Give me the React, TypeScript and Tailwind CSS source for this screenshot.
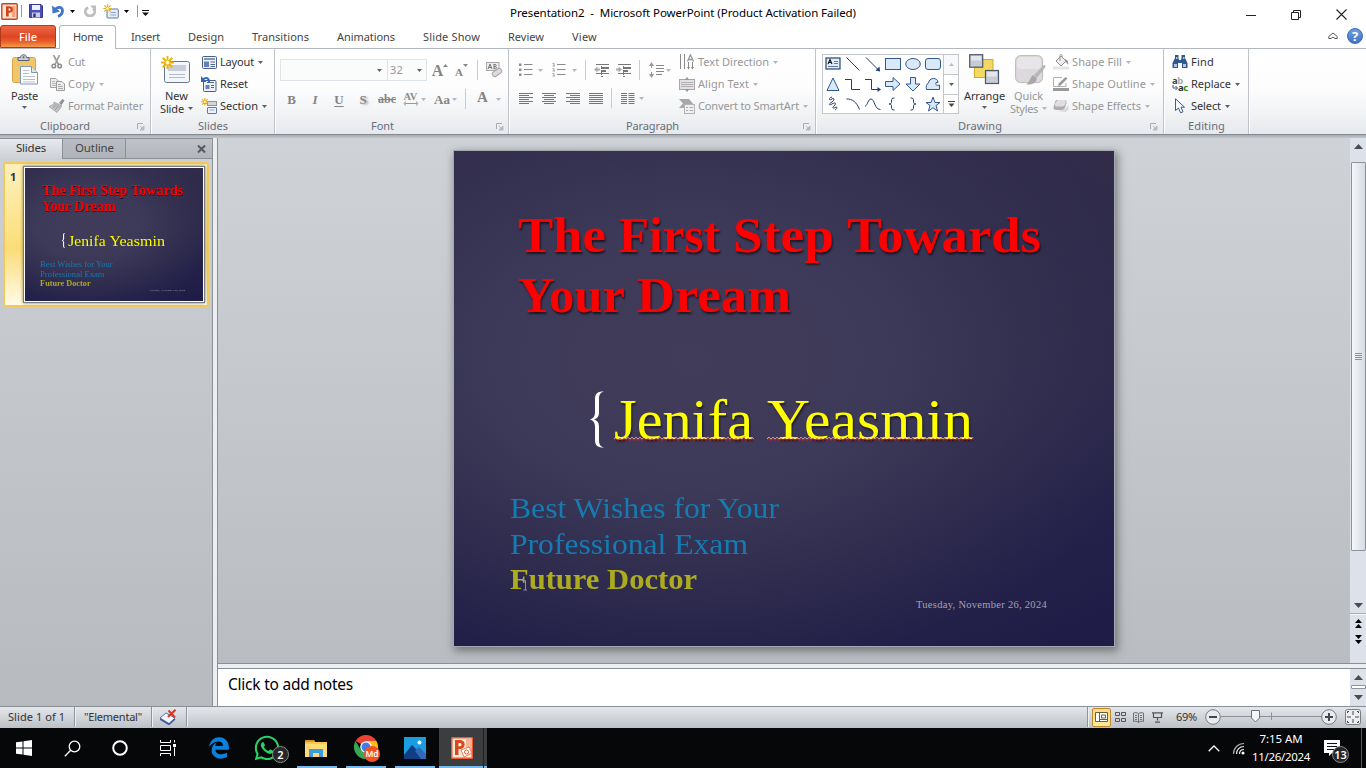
import React, { useLayoutEffect, useRef } from "react";
import { FaEdgeLegacy, FaWhatsapp } from "react-icons/fa";

/* A run of text set to an exact width, by tracking or by horizontal stretch. */
function Fit({ w, stretch = false, className = "", children }: { w: number; stretch?: boolean; className?: string; children: string }) {
  const ref = useRef<HTMLSpanElement>(null);
  useLayoutEffect(() => {
    const el = ref.current;
    if (!el) return;
    el.style.letterSpacing = "";
    el.style.transform = "";
    const natural = parseFloat(getComputedStyle(el).width);
    if (!natural) return;
    if (stretch) el.style.transform = `scaleX(${w / natural})`;
    else el.style.letterSpacing = `${(w - natural) / children.length}px`;
  }, [w, stretch, children]);
  return (
    <span className={`inline-block shrink-0 whitespace-nowrap text-left ${className}`} style={{ width: w }}>
      <span ref={ref} className="inline-block origin-left">{children}</span>
    </span>
  );
}

function Ico({ w, h, className = "", children }: { w: number; h: number; className?: string; children: React.ReactNode }) {
  return (
    <svg width={w} height={h} viewBox={`0 0 ${w} ${h}`} fill="none" className={`block shrink-0 ${className}`}>
      {children}
    </svg>
  );
}

function Caret({ dim = false, className = "" }: { dim?: boolean; className?: string }) {
  return (
    <Ico w={5} h={3} className={className}>
      <path d="M0 0H5L2.500 3Z" fill={dim ? "#b4b6b9" : "#5d6063"} />
    </Ico>
  );
}

function Row({ icon, label, w, dim = false, caret = false }: { icon: React.ReactNode; label: string; w: number; dim?: boolean; caret?: boolean }) {
  return (
    <div className={`flex h-[22px] items-center ${dim ? "text-[#979797]" : "text-[#333]"}`}>
      <span className="mr-[3px] flex w-4 justify-center">{icon}</span>
      <Fit w={w}>{label}</Fit>
      {caret && <Caret dim={dim} className="ml-[3.5px]" />}
    </div>
  );
}

function Group({ width, label, lw, ml, launcher = 0, children }: { width: string; label: string; lw: number; ml: string; launcher?: number; children: React.ReactNode }) {
  return (
    <section className={`flex h-full shrink-0 flex-col border-r border-[#bfc3c9] shadow-[1px_0_0_#fff] ${width}`}>
      <div className="flex h-[68px] pt-[2px]">{children}</div>
      <div className={`flex h-[17px] items-center text-[#696d78] ${ml}`}>
        <Fit w={lw}>{label}</Fit>
        {launcher > 0 && (
          <span className="mt-[2px]" style={{ marginLeft: launcher }}>
            <Ico w={8} h={8}>
              <path d="M.5 6V.5H6" stroke="#a9adb3" />
              <path d="M3 3L6 6M7 3V7H3Z" stroke="#a9adb3" fill="#c2c6ca" strokeWidth=".7" />
            </Ico>
          </span>
        )}
      </div>
    </section>
  );
}

function Sep({ className = "" }: { className?: string }) {
  return <span className={`h-5 w-px shrink-0 bg-[#c9ccd1] ${className}`} />;
}

/* ---------- icons ---------- */

const Star = ({ x = 6, y = 6, r = 5.5 }: { x?: number; y?: number; r?: number }) => (
  <g transform={`translate(${x} ${y}) scale(${r / 6})`} stroke="#e9b20c" strokeWidth="1.7">
    <path d="M0 -6V6M-6 0H6M-4.4 -4.4L4.4 4.4M-4.4 4.4L4.4 -4.4" />
    <circle r="1.8" fill="#fff6b8" stroke="none" />
  </g>
);

const PptLogo = () => (
  <Ico w={17} h={17}>
    <rect x=".8" y=".8" width="15.4" height="15.4" rx="1" fill="#fbe3d6" stroke="#c9431a" strokeWidth="1.4" />
    <path d="M11 3H14.5V14H11Z" fill="#f6a07c" />
    <path d="M5 3.2H8.6C13 3.2 13 9.7 8.6 9.7H7.7V13.6H5Z" fill="#cf4417" />
    <path d="M7.7 5.2H8.4C9.9 5.2 9.9 7.8 8.4 7.8H7.7Z" fill="#fff" />
  </Ico>
);

const Save = () => (
  <Ico w={14} h={14}>
    <path d="M.5 .5H12L13.5 2V13.5H.5Z" fill="#4b51b8" stroke="#343a93" />
    <rect x="3" y="1" width="8" height="5" fill="#eef1fb" />
    <rect x="3" y="8.5" width="8" height="5" fill="#c9cde6" />
    <rect x="4.3" y="9.5" width="2.4" height="3.5" fill="#2c3280" />
  </Ico>
);

const Undo = () => (
  <Ico w={12} h={13}>
    <path d="M2.500 5.500C5 1.500 10.500 1.300 10.500 5.500C10.500 8.500 8.500 10.500 6 11.500" stroke="#3f74c9" strokeWidth="2.8" />
    <path d="M0 .5L.5 8.500L8 6.500Z" fill="#3f74c9" />
  </Ico>
);

const Redo = () => (
  <Ico w={12} h={13}>
    <path d="M4 2.500C-.5 5 1 10.800 6 10.800C11 10.800 12 6 9 3.500" stroke="#bdbdbd" strokeWidth="2.600" />
    <path d="M6 .5H12V6.500Z" fill="#bdbdbd" />
  </Ico>
);

const NewQuick = () => (
  <Ico w={16} h={15}>
    <rect x="4" y="5" width="11.3" height="9" rx="1" fill="#e6edf8" stroke="#5d7aa5" />
    <path d="M7.5 8.5H13M7.5 11H13" stroke="#8fa3c2" />
    <Star x={4.5} y={4.5} r={4.3} />
  </Ico>
);

const PasteIcon = () => (
  <Ico w={28} h={31}>
    <rect x="1.5" y="3.5" width="23" height="25" rx="2" fill="#f1c56a" stroke="#d9a548" />
    <path d="M7 6.500V3.500H9.500C9.500 -.2 15.500 -.2 15.500 3.500H18V6.500Z" fill="#c8ced6" stroke="#59616c" />
    <circle cx="12.500" cy="3.300" r="1" fill="#59616c" />
    <path d="M9.500 12.500H20.500L26.500 18.500V30H9.500Z" fill="#fff" stroke="#7d98bb" />
    <path d="M20.500 12.500V18.500H26.500" fill="#dce6f3" stroke="#7d98bb" />
    <path d="M12 16.500H18M12 19.500H18M12 22.500H24M12 25.500H24M12 28H24" stroke="#b4c1d4" />
  </Ico>
);

const Cut = () => (
  <Ico w={12} h={14}>
    <path d="M2.500 0L7.500 9.500M8.500 0L4 9.500" stroke="#9d9d9d" strokeWidth="1.700" />
    <circle cx="2.800" cy="11" r="1.800" stroke="#8c8c8c" strokeWidth="1.500" />
    <circle cx="8.700" cy="11" r="1.800" stroke="#8c8c8c" strokeWidth="1.500" />
  </Ico>
);

const Copy = () => (
  <Ico w={15} h={13}>
    <path d="M.5 .5H6L8.500 3V9.500H.5Z" fill="#ededed" stroke="#a3a3a3" />
    <path d="M2 3.500H5M2 5.500H6M2 7.500H6" stroke="#b5b5b5" />
    <path d="M6.500 3.500H12L14.500 6V12.500H6.500Z" fill="#ededed" stroke="#9b9b9b" />
    <path d="M8 6.500H11M8 8.500H13M8 10.500H13" stroke="#a9a9a9" />
  </Ico>
);

const Painter = () => (
  <Ico w={16} h={14}>
    <path d="M10 4L13.500 0L15.500 1.500L12.500 6Z" fill="#8f8f8f" />
    <path d="M5 3L13 6.500L12 8.500L4.500 5Z" fill="#b9b9b9" stroke="#9d9d9d" strokeWidth=".5" />
    <path d="M4 5.500L11.500 9L8 13.500L0 7.500Z" fill="#c4c4c4" stroke="#9c9c9c" strokeWidth=".7" />
    <path d="M4 9L6 7M6 11L8.500 8" stroke="#999" />
  </Ico>
);

const NewSlideIcon = () => (
  <Ico w={31} h={30}>
    <rect x="4.500" y="6.500" width="25" height="21" rx="2" fill="#f3f6fb" stroke="#66778f" />
    <rect x="8" y="10" width="18" height="6" fill="#c9cdd9" />
    <path d="M9 19.500H25M9 22.500H25" stroke="#b4bac6" />
    <Star x={7.500} y={7.500} r={6.500} />
  </Ico>
);

const LayoutIcon = () => (
  <Ico w={15} h={13}>
    <rect x=".5" y=".5" width="14" height="12" rx="1" fill="#eef2f8" stroke="#4b5f80" />
    <rect x="2" y="2" width="11" height="2" fill="#8496b3" />
    <rect x="2" y="5.500" width="5" height="5.500" fill="#6381b8" />
    <path d="M8.500 6H13M8.500 8.500H13M8.500 10.500H13" stroke="#51678a" />
  </Ico>
);

const ResetIcon = () => (
  <Ico w={16} h={16}>
    <rect x="2.500" y="4.500" width="12.500" height="11" rx="1" fill="#eef2f8" stroke="#4b5f80" />
    <rect x="4.500" y="9" width="4" height="4" fill="#6381b8" />
    <path d="M6 6.500H13M10 9.500H13M10 11.500H13" stroke="#51678a" />
    <path d="M2 3.500C5 .7 8 2 8 6" stroke="#2f66bd" strokeWidth="2" />
    <path d="M0 0V6H5.500Z" fill="#2f66bd" />
  </Ico>
);

const SectionIcon = () => (
  <Ico w={16} h={16}>
    <rect x="6.500" y="3.500" width="9" height="4" fill="#d3d5d9" stroke="#8e939b" />
    <rect x="6.500" y="9.500" width="9" height="6" rx=".5" fill="#eef3fa" stroke="#5c7aa8" />
    <path d="M8.500 12H13.500" stroke="#8da4c6" />
    <Star x={3.800} y={3.800} r={3.800} />
  </Ico>
);

function Lines({ rows, h = 11 }: { rows: [number, number][]; h?: number }) {
  return (
    <Ico w={14} h={h}>
      {rows.map(([a, b], i) => <path key={i} d={`M${a} ${i * 2 + 0.5}H${b}`} stroke="#767676" />)}
    </Ico>
  );
}

const Bullets = ({ num = false }: { num?: boolean }) => (
  <Ico w={14} h={14}>
    {[1.500, 6.500, 11.500].map((y) => (
      <g key={y}>
        {num ? <path d={`M.5 ${y - 1}H2V${y + 1.500}M.5 ${y + 1.500}H3`} stroke="#8f8f8f" strokeWidth=".8" /> : <rect x="0" y={y - 1} width="2.500" height="2.500" fill="#8f8f8f" />}
        <path d={`M5 ${y}H13.500`} stroke="#8a8a8a" />
      </g>
    ))}
  </Ico>
);

const Indent = ({ out = false }: { out?: boolean }) => (
  <Ico w={16} h={13}>
    <path d="M2 .5H15M7 3.500H15M7 4.500H15M7 6.500H12M7 7.500H12M2 9.500H15M7 12.500H9" stroke="#777" />
    <path d="M7.500 0V13" stroke="#777" strokeDasharray="1 1" />
    {out ? <path d="M0 5.500L3.500 2.500V4.500H6V6.500H3.500V8.500Z" fill="#aaa" /> : <path d="M6 5.500L2.500 2.500V4.500H0V6.500H2.500V8.500Z" fill="#aaa" />}
  </Ico>
);

const Spacing = () => (
  <Ico w={16} h={16}>
    <path d="M2.500 1V15" stroke="#999" strokeDasharray="5 4" />
    <path d="M0 4L2.500 0L5 4ZM0 12L2.500 16L5 12Z" fill="#999" />
    <path d="M7 3.500H15M7 6.500H15M7 9.500H15M7 12.500H13" stroke="#888" />
  </Ico>
);

const TextDir = () => (
  <Ico w={16} h={16}>
    <path d="M1.500 0V15M5.500 0V15M9.500 8V15M13.500 8V15" stroke="#8b8b8b" />
    <path d="M8.500 7.500L11.500 .7L14.500 7.500M9.500 5.500H13.500" stroke="#999" strokeWidth="1.300" />
    <path d="M8 13H11L9.500 15.500ZM12 13H15L13.500 15.500Z" fill="#888" />
  </Ico>
);

const AlignTextIcon = () => (
  <Ico w={16} h={15}>
    <rect x=".5" y="2.500" width="15" height="10" fill="#e3e1e3" stroke="#aaa6aa" />
    <path d="M2 5.500H14M2 7.500H14M2 9.500H14" stroke="#b3b0b3" />
    <path d="M5.500 3L8 0L10.500 3ZM5.500 12L8 15L10.500 12Z" fill="#9a979a" />
  </Ico>
);

const SmartArt = () => (
  <Ico w={16} h={15}>
    <path d="M0 0H10L14 4.500L10 9H0L4 4.500Z" fill="#aaa7aa" />
    <rect x="5.500" y="5.500" width="10" height="9" fill="#f0eff0" stroke="#b4b2b4" />
    <path d="M7 8.500H9M10.500 8.500H14M7 11.500H9M10.500 11.500H14" stroke="#aaa" />
  </Ico>
);

const Arrange = () => (
  <Ico w={31} h={31}>
    <rect x="5.500" y="5.500" width="18.500" height="18" fill="#f4d863" stroke="#ceaa31" />
    <rect x=".7" y=".7" width="13" height="12.500" fill="#c6ccd4" stroke="#4b5667" strokeWidth="1.200" />
    <path d="M2 2H12V6.500H2Z" fill="#e3e7ec" />
    <rect x="16.500" y="16.500" width="13" height="13" fill="#c6ccd4" stroke="#4b5667" strokeWidth="1.200" />
    <path d="M18 18H28V22.500H18Z" fill="#e3e7ec" />
  </Ico>
);

const QuickStyles = () => (
  <Ico w={31} h={31}>
    <rect x=".6" y=".6" width="27" height="27" rx="5" fill="#dcd9dc" stroke="#bcb9bc" />
    <rect x="2" y="2" width="24" height="12" rx="4" fill="#e7e5e7" />
    <path d="M29.500 10L30 12L22 22L19.500 20Z" fill="#bab7ba" stroke="#a5a2a5" strokeWidth=".6" />
    <path d="M18 20L22 23C21 29 16 30 11 29.500C15 27 15 22 18 20Z" fill="#aaa7aa" />
  </Ico>
);

const FillIcon = () => (
  <Ico w={16} h={16}>
    <path d="M3 7L8 2L13 7L8 12Z" fill="#eee" stroke="#8e8e8e" />
    <path d="M7 7V1.500C7 0 9 0 9 1.500V3" stroke="#999" />
    <path d="M12 5C15 6 16 8 15 11C14 9 13 8 12 8Z" fill="#999" />
    <rect y="12.500" width="16" height="3" fill="#e6e2e6" />
  </Ico>
);

const OutlineIcon = () => (
  <Ico w={16} h={14}>
    <path d="M9 .5H.5V9.500H13V6" stroke="#b0b0b0" />
    <path d="M12.500 0L14.500 1.500L7.500 8.500L5 9L5.700 6.500Z" fill="#999" />
    <rect y="11" width="16" height="3" fill="#999" />
  </Ico>
);

const EffectsIcon = () => (
  <Ico w={16} h={14}>
    <path d="M4 12L13 13L15.500 10V6L11 11Z" fill="#d9d9d9" />
    <path d="M4 1H11C13 1 14 2 13.500 4L12 8.500C11.500 10 10.500 11 9 11H3C1 11 0 9.500 .6 8L2 3C2.300 1.500 3 1 4 1Z" fill="#b0adb0" />
    <path d="M4.500 1H11C13 1 13 2.500 12.500 4C12 6 11 7.500 9 7.500H4C2 7.500 1.500 6 2 4.500Z" fill="#e0dee0" />
  </Ico>
);

const Find = () => (
  <Ico w={16} h={14}>
    <path d="M3 0H6.500V3L7 5H9L9.500 3V0H13V3L15.500 8V13H10V8H6V13H.5V8L3 3Z" fill="#31578f" />
    <path d="M2 9H5V12H2ZM11 9H14V12H11ZM4 2H5.500V4H4ZM11 2H12.500V4H11Z" fill="#aac6ea" />
  </Ico>
);

const Replace = () => (
  <span className="flex w-4 flex-col text-[9.5px] leading-[8px] font-bold tracking-[-0.5px]">
    <span className="flex h-[7px] text-[#444]">a<span className="text-[#aaa]">b</span></span>
    <span className="flex h-2 items-center">
      <Ico w={6} h={6}><path d="M1 0V3H5M3.500 1L5.500 3L3.500 5" stroke="#315492" /></Ico>
      <span className="text-[#333]">a</span><span className="text-[#2f8b2b]">c</span>
    </span>
  </span>
);

const Select = () => (
  <Ico w={12} h={16} className="ml-[-1px]">
    <path d="M1.500 .8V12.500L4.500 10L6.500 14.800L9 13.800L7 9.200H10.500Z" fill="#f4f7fc" stroke="#3f5a86" />
  </Ico>
);

const shapes: React.ReactNode[] = [
  <g key="0"><rect x="1" y="3" width="14" height="11" fill="#e2ecf7" stroke="#274671" strokeWidth="1.200" /><path d="M3 9L5 4.500L7 9M3.800 7.500H6.200" stroke="#111" strokeWidth="1.100" /><path d="M9 6.500H13M9 8.500H13M3 11.500H13" stroke="#5e7ca8" /></g>,
  <path key="1" d="M1.500 2.500L14.500 15.500" stroke="#1f3f77" />,
  <g key="2"><path d="M1 2.500L14 15.500" stroke="#1f3f77" /><path d="M15 16.500L14.500 11.500L10.500 15.500Z" fill="#1f3f77" /></g>,
  <rect key="3" x=".5" y="3.500" width="15" height="11" fill="#d9e9f7" stroke="#2f588f" />,
  <ellipse key="4" cx="8" cy="9" rx="7.300" ry="5.500" fill="#d9e9f7" stroke="#2f588f" />,
  <rect key="5" x=".5" y="3.500" width="15" height="11" rx="2.500" fill="#d9e9f7" stroke="#2f588f" />,
  <path key="6" d="M8 3L14 15.500H2Z" fill="#d9e9f7" stroke="#2f588f" />,
  <path key="7" d="M0 4.500H6.500V14.500H15" stroke="#1f3f77" />,
  <g key="8"><path d="M0 4.500H6.500V14.500H13" stroke="#1f3f77" /><path d="M16 14.500L12.500 12V17Z" fill="#1f3f77" /></g>,
  <path key="9" d="M.5 6.500H8V2.500L15 9L8 15.500V11.500H.5Z" fill="#d9e9f7" stroke="#2f588f" />,
  <path key="10" d="M5.500 2.500H10.500V9H15L8 16L1 9H5.500Z" fill="#d9e9f7" stroke="#2f588f" />,
  <path key="11" d="M8.500 3.500C5 3.500 4 6 3.500 8C1 9 1 12 1.500 14.500H14.500V10C12 11 10 10 11 7.500H13C13 5 11 3.500 8.500 3.500Z" fill="#d9e9f7" stroke="#2f588f" />,
  <path key="12" d="M7 2C3 3 4 6 7 4C9 2 10 5 7 7C3 9 4 11 7 9C10 7 12 8 9 11C7 13 8 14 10 12.500C13 11 12 14 10 15" stroke="#1f3f77" />,
  <path key="13" d="M1.500 4C7 3.500 12 7.500 14.500 14.500" stroke="#1f3f77" />,
  <path key="14" d="M0 11.500C3 9.500 3 4 6 4C10 4 9 14.500 15.500 14.500" stroke="#1f3f77" />,
  <path key="15" d="M9.500 3C7 3 6.500 3.500 6.500 6C6.500 8.500 6 9 4 9C6 9 6.500 9.500 6.500 12C6.500 14.500 7 15 9.500 15" stroke="#1f3f77" />,
  <path key="16" d="M5.500 3C8 3 8.500 3.500 8.500 6C8.500 8.500 9 9 11 9C9 9 8.500 9.500 8.500 12C8.500 14.500 8 15 5.500 15" stroke="#1f3f77" />,
  <path key="17" d="M8 2L10 7.500H15L11 10.500L12.500 16L8 12.700L3.500 16L5 10.500L1 7.500H6Z" fill="#d9e9f7" stroke="#2f588f" />,
];

/* ---------- slide ---------- */

const redLine = "absolute left-16 flex text-[51px] font-bold leading-none text-[#ff0000] [text-shadow:1px_2px_2px_rgba(0,0,0,.6)]";

function Squiggle({ w, className }: { w: number; className: string }) {
  let d = "M0 2";
  for (let x = 2; x <= w; x += 2) d += `L${x} ${x % 4 ? 0.5 : 2.5}`;
  return (
    <Ico w={w} h={4} className={`absolute ${className}`}>
      <path d={d} stroke="#e9d9e0" strokeWidth=".8" transform="translate(0 -.3)" />
      <path d={d} stroke="#e01515" strokeWidth="1" transform="translate(0 1)" />
    </Ico>
  );
}

function Slide({ editing = false }: { editing?: boolean }) {
  return (
    <div className="relative h-[495px] w-[660px] shrink-0 overflow-hidden bg-[#211f49] bg-[radial-gradient(ellipse_85%_75%_at_36%_42%,#403c59_0%,#3d3958_35%,rgba(52,48,80,.75)_62%,rgba(40,37,76,.3)_85%,rgba(35,32,73,0)_100%),linear-gradient(#342e49_0%,#2c294b_45%,#211f49_75%,#1f1d47_100%)] font-['Liberation_Serif',serif]">
      <div className={`${redLine} top-[59px]`}>
        <Fit w={88} stretch>The</Fit>
        <Fit w={101} stretch className="ml-[13px]">First</Fit>
        <Fit w={101} stretch className="ml-[13px]">Step</Fit>
        <Fit w={194} stretch className="ml-[13px]">Towards</Fit>
      </div>
      <div className={`${redLine} top-[119px]`}>
        <Fit w={107} stretch>Your</Fit>
        <Fit w={154} stretch className="ml-[12px]">Dream</Fit>
      </div>
      <Ico w={16} h={57} className="absolute left-[135px] top-[240px]">
        <path d="M15 .5C9 .5 6 2 6 8V21C6 25.500 4 27.800 .5 28.500C4 29.200 6 31.500 6 36V49C6 55 9 56.500 15 56.500C11 55.500 10 53 10 49V36C10 31.500 8.500 29.500 5 28.500C8.500 27.500 10 25.500 10 21V8C10 4 11 1.500 15 .5Z" fill="#fff" />
      </Ico>
      <div className="absolute left-40 top-[241px] flex text-[56px] leading-none text-[#ffff00] [text-shadow:1px_2px_2px_rgba(0,0,0,.55)]">
        <Fit w={139} stretch>Jenifa</Fit>
        <Fit w={206} stretch className="ml-[14px]">Yeasmin</Fit>
      </div>
      {editing && <Squiggle w={140} className="left-40 top-[286px]" />}
      {editing && <Squiggle w={207} className="left-[313px] top-[286px]" />}
      <Fit w={269} stretch className="absolute left-[56px] top-[342px] text-[30px] leading-none text-[#167bb0]">Best Wishes for Your</Fit>
      <Fit w={238} stretch className="absolute left-[56px] top-[378px] text-[30px] leading-none text-[#167bb0]">Professional Exam</Fit>
      <Fit w={187} stretch className="absolute left-[56px] top-[413px] text-[30px] font-bold leading-none text-[#acac1e]">Future Doctor</Fit>
      <Fit w={131} className="absolute left-[462px] top-[449px] text-[10.5px] leading-none text-[#a3a2b5]">Tuesday, November 26, 2024</Fit>
      {editing && (
        <Ico w={5} h={11} className="absolute left-[68px] top-[429px]">
          <path d="M0 .5H3.500V10M1.500 10H5" stroke="#8f8fa8" />
        </Ico>
      )}
    </div>
  );
}

/* ---------- chrome of the window ---------- */

function TitleBar() {
  return (
    <header className="flex h-[25px] items-start bg-white">
      <div className="flex h-[22px] w-[510px] items-center pl-px">
        <PptLogo />
        <span className="ml-[3px] h-3 w-px bg-[#999]" />
        <span className="ml-[7px]"><Save /></span>
        <span className="ml-[9px]"><Undo /></span>
        <Caret className="ml-[6px] brightness-0" />
        <span className="ml-[9px]"><Redo /></span>
        <span className="ml-[7px]"><NewQuick /></span>
        <Caret className="ml-[5px] brightness-0" />
        <span className="ml-[8px] h-3 w-px bg-[#999]" />
        <Ico w={7} h={6} className="ml-1 mt-1"><path d="M0 .5H7" stroke="#111" /><path d="M0 2.500H7L3.500 6Z" fill="#111" /></Ico>
      </div>
      <Fit w={346} className="mt-[5px] text-[11.5px] leading-4 text-black">{"Presentation2\u00a0 -\u00a0 Microsoft PowerPoint (Product Activation Failed)"}</Fit>
      <div className="ml-auto mr-[19px] mt-[9px] flex items-center gap-[35px]">
        <Ico w={10} h={10}><path d="M0 5.500H10" stroke="#222" /></Ico>
        <Ico w={10} h={10}><path d="M.5 2.500H7.500V9.500H.5ZM2.500 2.500V.5H9.500V7.500H7.500" stroke="#222" /></Ico>
        <Ico w={11} h={11}><path d="M.5 .5L10.500 10.500M10.500 .5L.5 10.500" stroke="#222" strokeWidth="1.100" /></Ico>
      </div>
    </header>
  );
}

function Tabs() {
  return (
    <nav className="flex h-6 items-stretch border-b border-[#b3b8be] bg-white text-[#444]">
      <div className="flex w-14 items-center rounded-t-[3px] border border-[#b03a17] bg-[linear-gradient(#ee6a47,#dc4522_50%,#e8602c_75%,#f79a4a)] pl-[18px] font-medium text-white">
        <Fit w={18}>File</Fit>
      </div>
      <div className="-mb-px ml-[3px] flex w-[57px] items-center rounded-t-[3px] border border-b-0 border-[#b3b8be] bg-white pb-px pl-[13px]">
        <Fit w={30}>Home</Fit>
      </div>
      <div className="ml-[15px] flex items-center gap-7">
        <Fit w={29}>Insert</Fit>
        <Fit w={36}>Design</Fit>
        <Fit w={57}>Transitions</Fit>
        <Fit w={58}>Animations</Fit>
        <Fit w={57}>Slide Show</Fit>
        <Fit w={36}>Review</Fit>
        <Fit w={25}>View</Fit>
      </div>
      <div className="ml-auto mr-[3px] flex items-center gap-[9px] pb-px">
        <Ico w={10} h={8}><path d="M.8 4.500L5 1L9.200 4.500V6.500H7L5 5L3 6.500H.8Z" stroke="#555" /></Ico>
        <span className="flex size-4 items-center justify-center rounded-full border border-[#3568b4] bg-[linear-gradient(#6e9fe0,#3f74c7)] text-[13px] font-bold leading-none text-white">?</span>
      </div>
    </nav>
  );
}

const glyph = "flex shrink-0 justify-center font-['Liberation_Serif',serif] font-bold leading-none text-[#858585]";

function Ribbon() {
  return (
    <div className="flex h-[85px] bg-[linear-gradient(#ffffff_0%,#fdfdfe_45%,#f1f3f5_75%,#e6e9ed_100%)]">
      <Group width="w-[151px]" label="Clipboard" lw={50} ml="ml-[40px]" launcher={47}>
        <div className="ml-[11px] flex w-[38px] flex-col pt-[3px]">
          <PasteIcon />
          <Fit w={27} className="mt-[4px] leading-[14px] text-[#333]">Paste</Fit>
          <Caret className="ml-[11px] mt-[3px]" />
        </div>
        <div>
          <Row dim icon={<Cut />} label="Cut" w={17} />
          <Row dim icon={<Copy />} label="Copy" w={27} caret />
          <Row dim icon={<Painter />} label="Format Painter" w={75} />
        </div>
      </Group>

      <Group width="w-[124px]" label="Slides" lw={30} ml="ml-[47px]">
        <div className="ml-[9px] flex w-[41px] flex-col pt-[4px]">
          <NewSlideIcon />
          <Fit w={23} className="ml-[5px] mt-[4px] leading-[13px] text-[#333]">New</Fit>
          <span className="flex items-center"><Fit w={24} className="leading-[13px] text-[#333]">Slide</Fit><Caret className="ml-1" /></span>
        </div>
        <div>
          <Row icon={<LayoutIcon />} label="Layout" w={34} caret />
          <Row icon={<ResetIcon />} label="Reset" w={28} />
          <Row icon={<SectionIcon />} label="Section" w={38} caret />
        </div>
      </Group>

      <Group width="w-[234px]" label="Font" lw={23} ml="ml-[96px]" launcher={102}>
        <div className="ml-[5px]">
          <div className="mt-2 flex h-[22px] items-center">
            <div className="flex h-[22px] w-[108px] items-center justify-end border border-[#dfe2e6] bg-[#fafbfb] pr-[5px]"><Caret /></div>
            <div className="-ml-px flex h-[22px] w-10 items-center border border-[#dfe2e6] bg-[#fafbfb] pl-[2px] text-[#999]"><Fit w={13}>32</Fit><Caret className="ml-[14px]" /></div>
            <span className={`${glyph} ml-[5px] w-[11px] pt-0.5 text-[16px]`}>A</span>
            <Ico w={5} h={3} className="mb-[9px]"><path d="M0 3H5L2.500 0Z" fill="#888" /></Ico>
            <span className={`${glyph} ml-[7px] w-[8px] pt-1 text-[11px]`}>A</span>
            <Ico w={5} h={3} className="mb-[9px]"><path d="M0 0H5L2.500 3Z" fill="#888" /></Ico>
            <Sep className="ml-[9px]" />
            <Ico w={17} h={16} className="ml-[8px]">
              <rect x=".5" y=".5" width="12.500" height="8" fill="#eee" stroke="#a7a4a7" />
              <path d="M2 7L4 2L6 7M2.800 5.500H5.200M8 2V7M8 2.500C11 2 11 4.500 8 4.500C11.500 4.500 11.500 7 8 6.800" stroke="#777" />
              <rect x="6" y="8" width="10" height="5" rx="2" transform="rotate(-35 11 10.500)" fill="#dedcde" stroke="#a6a3a6" />
            </Ico>
          </div>
          <div className="mt-[6px] flex h-6 items-center text-[13px]">
            <span className={`${glyph} w-[23px]`}>B</span>
            <span className={`${glyph} w-6 italic`}>I</span>
            <span className={`${glyph} w-6 underline underline-offset-2`}>U</span>
            <span className={`${glyph} w-6 [text-shadow:2px_1px_2px_#aaa]`}>S</span>
            <span className={`${glyph} w-6 text-[12px] line-through`}>abc</span>
            <span className="flex w-[23px] flex-col items-center">
              <span className="font-['Liberation_Serif',serif] text-[10.5px] font-bold leading-[9px] text-[#8c8c8c]">AV</span>
              <Ico w={16} h={5}><path d="M2 2.500H14M3 .5L.8 2.500L3 4.500M13 .5L15.200 2.500L13 4.500" stroke="#999" /></Ico>
            </span>
            <Caret dim className="-ml-px" />
            <span className={`${glyph} ml-[8px] w-[16px]`}>Aa</span>
            <Caret dim className="ml-[2px]" />
            <Sep className="ml-[8px]" />
            <span className={`${glyph} ml-[8px] w-[17px] pb-[3px] text-[15px]`}>A</span>
            <Caret dim className="ml-[5px]" />
          </div>
        </div>
      </Group>

      <Group width="w-[307px]" label="Paragraph" lw={53} ml="ml-[117px]" launcher={124}>
        <div className="ml-[10px] w-[160px]">
          <div className="mt-2 flex h-[22px] items-center">
            <Bullets /><Caret dim className="ml-[5px]" />
            <span className="ml-[9px]"><Bullets num /></span><Caret dim className="ml-[6px]" />
            <Sep className="ml-[8px]" />
            <span className="ml-[8px]"><Indent out /></span>
            <span className="ml-[6px]"><Indent /></span>
            <Sep className="ml-[7px]" />
            <span className="ml-[9px]"><Spacing /></span><Caret dim className="ml-px" />
          </div>
          <div className="mt-[5px] flex h-6 items-center">
            <Lines rows={[[0, 14], [0, 10], [0, 14], [0, 10], [0, 14], [0, 10]]} />
            <span className="ml-[9px]"><Lines rows={[[0, 14], [2, 12], [0, 14], [2, 12], [0, 14], [2, 12]]} /></span>
            <span className="ml-[10px]"><Lines rows={[[0, 14], [4, 14], [0, 14], [4, 14], [0, 14], [4, 14]]} /></span>
            <span className="ml-[9px]"><Lines rows={[[0, 14], [0, 14], [0, 14], [0, 14], [0, 14], [0, 14]]} /></span>
            <Sep className="ml-[8px]" />
            <Ico w={14} h={11} className="ml-[9px]">
              {[0.5, 2.500, 4.500, 6.500, 8.500, 10.500].map((y) => <path key={y} d={`M0 ${y}H6M7.500 ${y}H13.500`} stroke="#767676" />)}
            </Ico>
            <Caret dim className="ml-1" />
          </div>
        </div>
        <div>
          <Row dim icon={<TextDir />} label="Text Direction" w={71} caret />
          <Row dim icon={<AlignTextIcon />} label="Align Text" w={51} caret />
          <Row dim icon={<SmartArt />} label="Convert to SmartArt" w={101} caret />
        </div>
      </Group>

      <Group width="w-[348px]" label="Drawing" lw={44} ml="ml-[142px]" launcher={148}>
        <div className="ml-[6px] mt-[3px] flex h-[60px] w-[137px] shrink-0 border border-[#c3c7cc] bg-white">
          <div className="grid grid-cols-[repeat(6,20px)] grid-rows-[20px_20px_18px]">
            {shapes.map((s, i) => <Ico key={i} w={16} h={18} className="ml-[2px]">{s}</Ico>)}
          </div>
          <div className="ml-auto flex w-[15px] shrink-0 flex-col divide-y divide-[#c3c7cc] border-l border-[#c3c7cc]">
            <span className="flex h-5 items-center justify-center bg-[#f7f8f9]"><Ico w={5} h={3}><path d="M0 3H5L2.500 0Z" fill="#bbb" /></Ico></span>
            <span className="flex h-5 items-center justify-center"><Caret /></span>
            <span className="flex flex-1 items-center justify-center"><Ico w={7} h={6}><path d="M0 .5H7" stroke="#444" /><path d="M.5 2.500H6.500L3.500 6Z" fill="#444" /></Ico></span>
          </div>
        </div>
        <div className="ml-[5px] flex w-[46px] shrink-0 flex-col pt-[3px]">
          <span className="ml-[5px]"><Arrange /></span>
          <Fit w={41} className="mt-[4px] leading-[14px] text-[#333]">Arrange</Fit>
          <Caret className="ml-[18px] mt-[3px]" />
        </div>
        <div className="flex w-[43px] shrink-0 flex-col pt-[4px] text-[#979797]">
          <span className="ml-[5px]"><QuickStyles /></span>
          <Fit w={29} className="ml-[4px] mt-[3px] leading-[13px]">Quick</Fit>
          <span className="flex items-center"><Fit w={28} className="leading-[13px]">Styles</Fit><Caret dim className="ml-[4px]" /></span>
        </div>
        <div>
          <Row dim icon={<FillIcon />} label="Shape Fill" w={50} caret />
          <Row dim icon={<OutlineIcon />} label="Shape Outline" w={74} caret />
          <Row dim icon={<EffectsIcon />} label="Shape Effects" w={69} caret />
        </div>
      </Group>

      <Group width="w-[85px]" label="Editing" lw={37} ml="ml-[24px]">
        <div className="ml-[8px]">
          <Row icon={<Find />} label="Find" w={23} />
          <Row icon={<Replace />} label="Replace" w={40} caret />
          <Row icon={<Select />} label="Select" w={30} caret />
        </div>
      </Group>
    </div>
  );
}

function ScrollArrow({ down = false, double = false }: { down?: boolean; double?: boolean }) {
  if (double) {
    return (
      <Ico w={7} h={9} className={down ? "rotate-180" : ""}>
        <path d="M0 4L3.500 0L7 4ZM0 9L3.500 5L7 9Z" fill="#000" />
      </Ico>
    );
  }
  return (
    <Ico w={9} h={5} className={down ? "rotate-180" : ""}>
      <path d="M0 5L4.500 0L9 5Z" fill="#4a4d52" />
    </Ico>
  );
}

function SlidesPanel() {
  return (
    <aside className="flex w-[213px] shrink-0 flex-col border-r border-[#8b9096] bg-[linear-gradient(#cdd0d4,#b7babf)]">
      <div className="flex h-[21px] shrink-0 border-t border-[#8b9096] text-[11.5px]">
        <div className="flex w-[63px] items-center border-r border-[#8b9096] bg-[linear-gradient(#e6e9ed,#cdd0d4)] pb-[2px] pl-4 text-[#333]"><Fit w={30}>Slides</Fit></div>
        <div className="flex w-[63px] items-center border-b border-r border-[#8b9096] bg-[linear-gradient(#b9bdc3,#b0b4ba)] pb-px pl-3 text-[#444]"><Fit w={39}>Outline</Fit></div>
        <div className="flex flex-1 items-center justify-end border-b border-[#8b9096] bg-[linear-gradient(#bfc3c8,#b2b6bb)] pr-[6px]">
          <Ico w={9} h={8}><path d="M1 .5L8 7.500M8 .5L1 7.500" stroke="#55585d" strokeWidth="2" /></Ico>
        </div>
      </div>
      <div className="ml-[3px] mt-[3px] flex h-[145px] w-[206px] rounded-[3px] border-2 border-[#f3c95c] bg-[linear-gradient(#fdf0bd,#fce38a_45%,#fbdc78_60%,#fffbe8)] pt-[2px]">
        <span className="w-[18px] pl-[5px] pt-[3px] text-[11px] font-bold leading-4 text-[#333]">1</span>
        <div className="h-[137px] w-[182px] border border-[#777b85] bg-white p-px shadow-[0_0_3px_#8b7a3a]">
          <div className="h-[133px] w-[178px] overflow-hidden">
            <div className="h-[495px] w-[660px] origin-top-left scale-[0.2698]"><Slide /></div>
          </div>
        </div>
      </div>
    </aside>
  );
}

function Workspace() {
  return (
    <div className="flex h-[568px] bg-[#eceef0]">
      <SlidesPanel />
      <main className="ml-[4px] flex min-w-0 flex-1 flex-col border-l border-[#8b9096]">
        <div className="flex h-[526px] border-b border-[#8b9096]">
          <div className="flex-1 bg-[linear-gradient(#cfd2d6,#b9bcc0)] pl-[236px] pt-[13px]">
            <div className="size-fit shadow-[0_0_0_1px_#a5a8b0,2px_3px_8px_2px_rgba(60,62,66,.55)]"><Slide editing /></div>
          </div>
          <div className="flex w-4 flex-col items-center bg-[#dde1e9] pt-[6px]">
            <ScrollArrow />
            <div className="mt-[13px] flex h-[389px] w-[15px] items-center justify-center rounded-[1px] border border-[#8e939b] bg-[linear-gradient(90deg,#f5f7fa,#d7dbe3)]">
              <Ico w={7} h={7}><path d="M0 .5H7M0 2.500H7M0 4.500H7M0 6.500H7" stroke="#8e939b" /></Ico>
            </div>
            <span className="mt-[52px]"><ScrollArrow down /></span>
            <span className="mt-[5px] h-px w-4 bg-[#a9adb4] shadow-[0_1px_0_#f4f6f8]" />
            <span className="ml-px mt-[5px]"><ScrollArrow double /></span>
            <span className="ml-px mt-[7px]"><ScrollArrow double down /></span>
          </div>
        </div>
        <div className="mt-1 flex h-[38px] border-t border-[#8b9096] bg-white">
          <div className="flex-1 pl-[10px] pt-[4px] text-[15.5px] leading-[22px] text-black"><Fit w={125}>Click to add notes</Fit></div>
          <div className="flex w-4 flex-col items-center bg-[#dde1e9] pt-[6px]">
            <ScrollArrow />
            <span className="mt-[5px] h-[4px] w-[15px] rounded-[1px] border border-[#8e939b] bg-white" />
            <span className="mt-[6px]"><ScrollArrow down /></span>
          </div>
        </div>
      </main>
    </div>
  );
}

function StatusBar() {
  const sep = "h-[20px] w-px bg-[#8f949b] shadow-[1px_0_0_#eef0f2]";
  return (
    <footer className="flex h-[22px] items-center border-t border-[#8b9096] bg-[linear-gradient(#e3e6ea,#d3d6da_45%,#bdc0c6)] pb-px text-[#333]">
      <Fit w={57} className="ml-2">Slide 1 of 1</Fit>
      <span className={`ml-[9px] ${sep}`} />
      <Fit w={58} className="ml-[9px]">"Elemental"</Fit>
      <span className={`ml-[9px] ${sep}`} />
      <Ico w={17} h={16} className="ml-[8px]">
        <path d="M0 9L6 4L15 9L9 14.500Z" fill="#f4f6fa" stroke="#566fa8" />
        <path d="M0 10L9 15.500L15 10" stroke="#3b5ba2" strokeWidth="1.500" />
        <path d="M8.500 1.500L15 8.500M15.500 .8L8 8" stroke="#e2341d" strokeWidth="2" />
      </Ico>
      <span className={`ml-[9px] ${sep}`} />
      <div className="ml-auto flex items-center">
        <span className={sep} />
        <span className="ml-1 flex h-[19px] w-[19px] items-center justify-center rounded-[2px] border border-[#c08a2b] bg-[linear-gradient(#fbd98a,#fcec9a)]">
          <Ico w={13} h={10}><path d="M.5 .5H12.500V9.500H.5ZM4.500 .5V9.500M6.500 3H10.500V6H6.500ZM4.500 7.500H12.500" stroke="#6b6034" fill="#fff" /></Ico>
        </span>
        <Ico w={11} h={10} className="ml-1"><path d="M.5 .5H4.500V3.500H.5ZM6.500 .5H10.500V3.500H6.500ZM.5 6.500H4.500V9.500H.5ZM6.500 6.500H10.500V9.500H6.500Z" stroke="#555" /></Ico>
        <Ico w={11} h={11} className="ml-[7px]"><path d="M5.500 1.500C4 .5 2 .5 .5 1V9.500C2 9 4 9 5.500 10.500C7 9 9 9 10.500 9.500V1C9 .5 7 .5 5.500 1.500V10.500M2 3.500H4M2 5.500H4M2 7.500H4M7 3.500H9M7 5.500H9M7 7.500H9" stroke="#666" strokeWidth=".9" /></Ico>
        <Ico w={11} h={11} className="ml-[8px]"><path d="M0 .8H11M1.500 1V5.500H9.500V1M5.500 5.500V8.500M3 10.200H8" stroke="#555" strokeWidth="1.200" /></Ico>
        <Fit w={21} className="ml-[13px]">69%</Fit>
        <Ico w={156} h={18} className="ml-[8px]">
          <path d="M16 8.500H117M66.500 4.500V12" stroke="#8b9097" />
          <circle cx="8" cy="9" r="7.300" fill="#e9ebee" stroke="#777c83" /><path d="M4 9H12" stroke="#44474c" strokeWidth="2" />
          <path d="M46.500 2.500H54.500V10L50.500 14L46.500 10Z" fill="#f6f7f8" stroke="#6d7279" />
          <circle cx="124" cy="9" r="7.300" fill="#e9ebee" stroke="#777c83" /><path d="M120 9H128M124 5V13" stroke="#44474c" strokeWidth="2" />
          <rect x="140.500" y="1.500" width="15" height="15" rx="2" fill="#eceef0" stroke="#777c83" />
          <path d="M142 9H146M150 9H154M148 3V7M148 11V15M142.500 5V3.500H144M152 3.500H153.500V5M142.500 13V14.500H144M152 14.500H153.500V13" stroke="#44474c" />
        </Ico>
        <span className="w-[5px]" />
      </div>
    </footer>
  );
}

function CountBadge({ n, className }: { n: string; className: string }) {
  return <span className={`absolute flex h-[17px] w-[17px] items-center justify-center rounded-full border border-[#8b8b8b] bg-[#262728] text-[11px] font-semibold leading-none text-white ${className}`}>{n}</span>;
}

function TaskBar() {
  const cell = "relative flex h-10 shrink-0 items-center justify-center";
  const line = "absolute bottom-0 h-[2px] bg-[#76b9ed]";
  return (
    <footer className="flex h-10 bg-[#050708] text-white">
      <div className={`${cell} w-12`}>
        <Ico w={16} h={16}><path d="M0 2.300L6.500 1.400V7.500H0ZM7.500 1.200L16 0V7.500H7.500ZM0 8.500H6.500V14.600L0 13.700ZM7.500 8.500H16V16L7.500 14.800Z" fill="#fff" /></Ico>
      </div>
      <div className={`${cell} w-12`}><Ico w={17} h={17}><circle cx="10.500" cy="6.500" r="5.300" stroke="#fff" strokeWidth="1.300" /><path d="M6.700 10.300L.8 16.200" stroke="#fff" strokeWidth="1.300" /></Ico></div>
      <div className={`${cell} w-12`}><Ico w={16} h={16}><circle cx="8" cy="8" r="6.800" stroke="#fff" strokeWidth="2" /></Ico></div>
      <div className={`${cell} w-12`}>
        <Ico w={16} h={16}><path d="M.5 0V2.500H10.500V0M.5 5.500H10.500V10.500H.5ZM.5 16V13.500H10.500V16M14.500 0V2.500M14.500 7.500V16" stroke="#fff" /><rect x="13" y="4" width="3" height="3" fill="#fff" /></Ico>
      </div>
      <div className={`${cell} ml-[3px] w-12`}><FaEdgeLegacy size={22} color="#0a7fdc" /></div>
      <div className={`${cell} w-12`}><FaWhatsapp size={28} color="#25d366" /><CountBadge n="2" className="left-[29px] top-[18px]" /></div>
      <div className={`${cell} ml-[2px] w-12`}>
        <Ico w={22} h={19} className="mr-[2px]">
          <path d="M0 1H9L10 3H22V18H0Z" fill="#fbc94a" /><path d="M0 1H9L10 3H0Z" fill="#d99a17" /><path d="M0 5H22V18H0Z" fill="#fddb76" />
          <path d="M4 18V10H18V18H14V14H8V18Z" fill="#3a9be0" />
        </Ico>
        <span className={`${line} left-[4px] w-[31px]`} /><span className={`${line} left-[35px] w-[9px] bg-[#4c7ea5]`} />
      </div>
      <div className={`${cell} ml-px w-[49px]`}>
        <Ico w={26} h={26}>
          <path d="M12 12L1.600 6A12 12 0 0 1 22.400 6Z" fill="#ea4335" />
          <path d="M12 12V6H22.400A12 12 0 0 1 12 24L17.200 15Z" fill="#fbc116" />
          <path d="M12 12L17.200 15L12 24A12 12 0 0 1 1.600 6L6.800 15Z" fill="#34a853" />
          <circle cx="12" cy="12" r="5.800" fill="#fff" /><circle cx="12" cy="12" r="4.500" fill="#3b7de9" />
        </Ico>
        <span className="absolute left-[22px] top-[18px] flex size-[16px] items-center justify-center rounded-full bg-[#f4511e] text-[8.5px] font-semibold leading-none">Md</span>
        <span className={`${line} left-[4px] w-10`} />
      </div>
      <div className={`${cell} w-[48px]`}>
        <Ico w={22} h={22}>
          <rect width="22" height="22" fill="#1b9de2" /><path d="M0 18L8 8L22 22H0Z" fill="#123f83" /><path d="M11 14L15 10L22 17V22H17Z" fill="#2f6ab8" /><circle cx="15.500" cy="5.500" r="2" fill="#fff" />
        </Ico>
        <span className={`${line} left-[4px] w-10`} />
      </div>
      <div className={`${cell} w-12 bg-[#3b3d3e]`}>
        <Ico w={22} h={22} className="mr-[2px]">
          <rect width="22" height="22" rx="1" fill="#e9592c" /><rect x="1.500" y="1.500" width="19" height="19" fill="#fae7dc" />
          <path d="M15 1.500H20.500V12H15Z" fill="#f7b493" />
          <path d="M4 3H9.500C15 3 15 12 9.500 12H7.500V18H4Z" fill="#d54a1b" /><path d="M7.500 6H9C11 6 11 9.200 9 9.200H7.500Z" fill="#fff" />
          <path d="M10 13L18 10L21 16L13 20Z" fill="#fff" stroke="#e9592c" strokeWidth=".8" /><circle cx="15.500" cy="15" r="2" stroke="#e9592c" />
        </Ico>
        <span className={`${line} left-0 w-[44px]`} /><span className={`${line} left-[44px] w-1 bg-[#5c93bd]`} />
        <span className="absolute right-[3px] top-0 h-10 w-px bg-[#1c1e1f]" />
      </div>
      <div className="ml-auto flex items-center">
        <Ico w={12} h={7}><path d="M.7 6.300L6 1L11.300 6.300" stroke="#fff" strokeWidth="1.300" /></Ico>
        <Ico w={14} h={14} className="ml-[12px]">
          <circle cx="11" cy="12" r="1.500" fill="#fff" />
          <path d="M7.500 13C7.500 10 9 8.500 12 8.500M4.500 13C4.500 8.500 7.500 5.500 12 5.500" stroke="#eee" strokeWidth="1.200" />
          <path d="M1.500 13C1.500 7 6 2.500 12 2.500" stroke="#aaa" strokeWidth="1.200" />
        </Ico>
        <div className="ml-[6px] flex w-[58px] flex-col items-center pb-px text-[11.5px] leading-[18px]">
          <Fit w={43}>7:15 AM</Fit>
          <Fit w={58}>11/26/2024</Fit>
        </div>
        <div className={`${cell} ml-[14px] w-[37px] !justify-start`}>
          <Ico w={17} h={16} className="mb-px"><path d="M0 0H16V13H8L5 16V13H0Z" fill="#fff" /><path d="M3 3.500H13M3 6.500H13M3 9.500H13" stroke="#111" /></Ico>
          <CountBadge n="13" className="left-[8px] top-[18px]" />
        </div>
        <span className="mr-[4px] h-10 w-px bg-[#55585a]" />
      </div>
    </footer>
  );
}

export default function App() {
  return (
    <div className="h-[768px] w-[1366px] overflow-hidden bg-white font-['Noto_Sans',sans-serif] text-[11px] leading-4">
      <TitleBar />
      <Tabs />
      <Ribbon />
      <div className="h-1 border-t border-[#84898f] bg-[linear-gradient(#a9adb2,#c3c6cb)]" />
      <Workspace />
      <StatusBar />
      <TaskBar />
    </div>
  );
}
